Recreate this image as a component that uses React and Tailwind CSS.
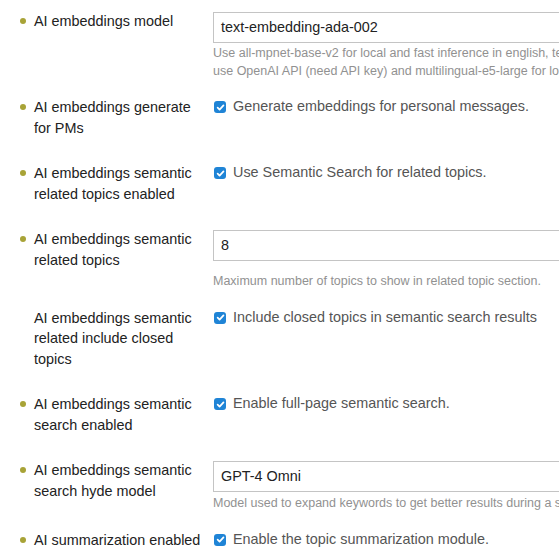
import React from "react";

const FONT = { fontFamily: '"Liberation Sans", Arial, Helvetica, sans-serif' };

function Label({ text, dot = true }) {
  return (
    <div className="w-[213px] shrink-0 flex items-start pl-[20px] pb-[8px]">
      <div className="w-[14px] shrink-0 h-[20.5px] flex items-center">
        {dot && <span className="block w-[6px] h-[6px] rounded-full bg-[#a8a337]" />}
      </div>
      <div className="w-[170px] text-[14.4px] leading-[20.5px] text-[#222222]">{text}</div>
    </div>
  );
}

function TextInput({ value }) {
  return (
    <div className="mt-[1px] h-[31px] w-[505px] border border-[#c4c4c4] bg-white flex items-center pl-[7px] text-[14.4px] text-[#222222]">
      {value}
    </div>
  );
}

function Desc({ children, mt }) {
  return (
    <div className={`${mt} w-[505px] text-[12.5px] leading-[17.5px] text-[#919191]`}>{children}</div>
  );
}

function Check({ text }) {
  return (
    <div className="h-[20.5px] flex items-center gap-[7px] text-[14.4px] text-[#555555]">
      <span className="ml-[1px] w-[12px] h-[12px] rounded-[3px] bg-[#1f84d6] flex items-center justify-center shrink-0">
        <svg width="9" height="9" viewBox="0 0 10 10">
          <path d="M1.8 5.2 L4 7.4 L8.3 2.6" fill="none" stroke="white" strokeWidth="1.9" strokeLinecap="round" strokeLinejoin="round" />
        </svg>
      </span>
      <span className="whitespace-nowrap">{text}</span>
    </div>
  );
}

function Row({ children }) {
  return <div className="flex items-start mb-[17px]">{children}</div>;
}

export default function App() {
  return (
    <div className="w-[559px] h-[560px] overflow-hidden bg-white pt-[11px]" style={FONT}>
      <Row>
        <Label text="AI embeddings model" />
        <div className="shrink-0">
          <TextInput value="text-embedding-ada-002" />
          <Desc mt="mt-[2px]">
            Use all-mpnet-base-v2 for local and fast inference in english, text-embedding-ada-002 to use OpenAI API (need API key) and multilingual-e5-large for local multilingual embeddings
          </Desc>
        </div>
      </Row>
      <Row>
        <Label text="AI embeddings generate for PMs" />
        <Check text="Generate embeddings for personal messages." />
      </Row>
      <Row>
        <Label text="AI embeddings semantic related topics enabled" />
        <Check text="Use Semantic Search for related topics." />
      </Row>
      <Row>
        <Label text="AI embeddings semantic related topics" />
        <div className="shrink-0">
          <TextInput value="8" />
          <Desc mt="mt-[12px]">Maximum number of topics to show in related topic section.</Desc>
        </div>
      </Row>
      <Row>
        <Label text="AI embeddings semantic related include closed topics" dot={false} />
        <Check text="Include closed topics in semantic search results" />
      </Row>
      <Row>
        <Label text="AI embeddings semantic search enabled" />
        <Check text="Enable full-page semantic search." />
      </Row>
      <Row>
        <Label text="AI embeddings semantic search hyde model" />
        <div className="shrink-0">
          <TextInput value="GPT-4 Omni" />
          <Desc mt="mt-[3px]">Model used to expand keywords to get better results during a semantic search</Desc>
        </div>
      </Row>
      <Row>
        <Label text="AI summarization enabled" />
        <Check text="Enable the topic summarization module." />
      </Row>
    </div>
  );
}
